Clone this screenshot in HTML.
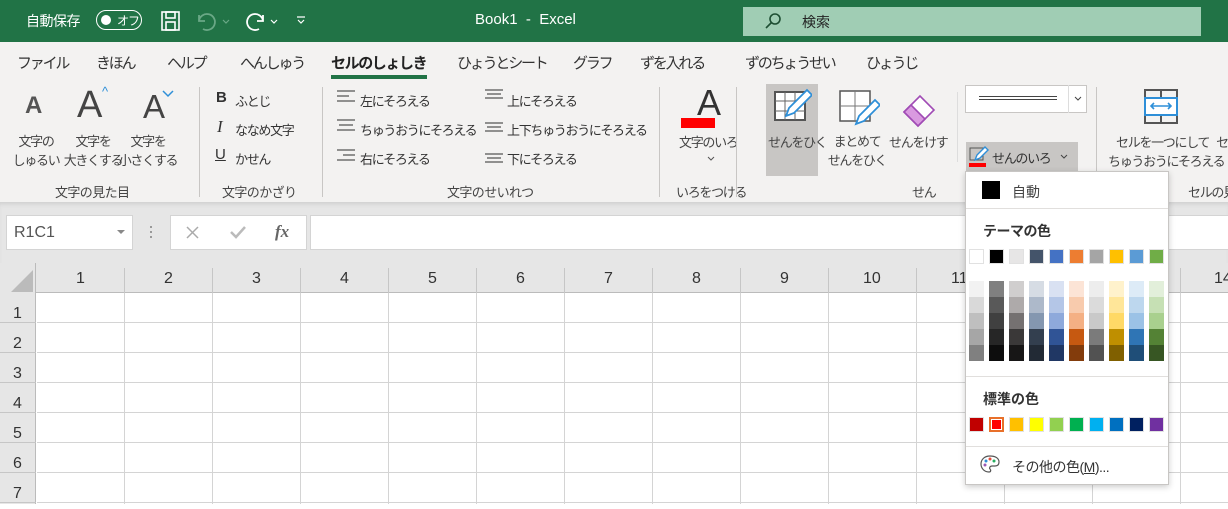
<!DOCTYPE html>
<html><head><meta charset="utf-8"><style>
*{margin:0;padding:0;box-sizing:border-box}
body{width:1228px;height:504px;overflow:hidden;position:relative;background:#fff;font-family:"Liberation Sans","Noto Sans CJK JP",sans-serif;color:#262626;font-size:13px}
.a{position:absolute;white-space:nowrap}
.t{font-size:13px;color:#333;letter-spacing:-1.3px}
.lbl{font-size:13px;color:#444;text-align:center;letter-spacing:-1.3px}
.g{letter-spacing:-0.6px}
.sep{position:absolute;width:1px;background:#c8c6c4}
.sw{position:absolute;width:15px;height:15px;border:1px solid #e1e1e1}
.col{position:absolute;width:15px;height:80px}
.tabs span{position:absolute;letter-spacing:-2.2px}
</style></head><body>
<!-- title bar -->
<div class="a" style="left:0;top:0;width:1228px;height:42px;background:#217346"></div>
<div class="a" style="left:26px;top:11px;color:#fff;font-size:14px;letter-spacing:-0.5px">自動保存</div>
<div class="a" style="left:96px;top:10px;width:46px;height:20px;border:1.5px solid #fff;border-radius:10px"></div>
<div class="a" style="left:101px;top:15px;width:10px;height:10px;background:#fff;border-radius:50%"></div>
<div class="a" style="left:117px;top:12px;color:#fff;font-size:12px;letter-spacing:-1px">オフ</div>
<svg class="a" style="left:160px;top:10px" width="22" height="22" viewBox="0 0 22 22" fill="none" stroke="#fff" stroke-width="1.6"><rect x="2" y="2" width="17" height="18"/><rect x="6" y="2" width="9" height="6"/><rect x="6" y="12" width="9" height="8"/></svg>
<svg class="a" style="left:195px;top:9px" width="40" height="24" viewBox="0 0 40 24" fill="none" stroke="#6aa886" stroke-width="1.8"><path d="M4 6v6h6M4 12a8 8 0 1 1 4 8"/><path d="M28 11l3 3 3-3" stroke-width="1.2"/></svg>
<svg class="a" style="left:243px;top:9px" width="40" height="24" viewBox="0 0 40 24" fill="none" stroke="#fff" stroke-width="1.8"><path d="M20 6v6h-6M20 12a8 8 0 1 0-4 8"/><path d="M28 11l3 3 3-3" stroke-width="1.2"/></svg>
<svg class="a" style="left:294px;top:13px" width="14" height="14" viewBox="0 0 14 14" fill="none" stroke="#fff" stroke-width="1.2"><path d="M3 4h8M4 7l3 3 3-3"/></svg>
<div class="a" style="left:475px;top:11px;color:#fff;font-size:15px">Book1&nbsp; - &nbsp;Excel</div>
<div class="a" style="left:743px;top:7px;width:458px;height:29px;background:#a0cdb4"></div>
<svg class="a" style="left:763px;top:11px" width="20" height="20" viewBox="0 0 20 20" fill="none" stroke="#1e4f33" stroke-width="1.6"><circle cx="12" cy="8" r="5"/><path d="M8.5 11.5L3 17"/></svg>
<div class="a" style="left:802px;top:12px;font-size:14px;color:#222">検索</div>
<!-- tabs -->
<div class="a" style="left:0;top:42px;width:1228px;height:160px;background:#f3f2f1"></div>
<div class="a tabs" style="left:0;top:52px;font-size:15px;color:#333">
<span style="left:17px">ファイル</span><span style="left:96px">きほん</span><span style="left:167px">ヘルプ</span><span style="left:240px">へんしゅう</span><span style="left:331px;font-weight:bold;color:#222;letter-spacing:-1.4px">セルのしょしき</span><span style="left:457px">ひょうとシート</span><span style="left:573px">グラフ</span><span style="left:640px">ずを入れる</span><span style="left:745px">ずのちょうせい</span><span style="left:866px">ひょうじ</span></div>
<div class="a" style="left:331px;top:75px;width:96px;height:4px;background:#217346"></div>
<!-- group 1 -->
<div class="a" style="left:25px;top:92px;font-size:24px;font-weight:bold;color:#555">A</div>
<div class="a" style="left:77px;top:84px;font-size:38px;color:#444;font-weight:300">A</div>
<div class="a" style="left:102px;top:84px;color:#2e8fd8;font-size:13px">^</div>
<div class="a" style="left:143px;top:88px;font-size:33px;color:#444">A</div>
<svg class="a" style="left:162px;top:90px" width="12" height="8"><path d="M1 1l5 5 5-5" fill="none" stroke="#2e8fd8" stroke-width="1.5"/></svg>
<div class="a lbl" style="left:5px;width:62px;top:132px;line-height:19px">文字の<br>しゅるい</div>
<div class="a lbl" style="left:60px;width:66px;top:132px;line-height:19px">文字を<br>大きくする</div>
<div class="a lbl" style="left:115px;width:66px;top:132px;line-height:19px">文字を<br>小さくする</div>
<div class="a lbl g" style="left:55px;top:182px">文字の見た目</div>
<div class="sep" style="left:199px;top:87px;height:110px"></div>
<!-- group 2 -->
<div class="a" style="left:216px;top:89px;font-weight:bold;font-size:15px;color:#333">B</div><div class="a t" style="left:235px;top:91px">ふとじ</div>
<div class="a" style="left:217px;top:117px;font-style:italic;font-family:'Liberation Serif',serif;font-size:17px;color:#333">I</div><div class="a t" style="left:235px;top:120px">ななめ文字</div>
<div class="a" style="left:215px;top:146px;text-decoration:underline;font-size:15px;color:#333">U</div><div class="a t" style="left:235px;top:149px">かせん</div>
<div class="a lbl g" style="left:222px;top:182px">文字のかざり</div>
<div class="sep" style="left:322px;top:87px;height:110px"></div>
<!-- group 3 -->
<svg class="a" style="left:336px;top:88px" width="20" height="80" fill="none" stroke="#555" stroke-width="1.3"><path d="M1 3h18M1 8h12M1 13h18"/><path d="M1 32h18M3 37h14M1 42h18"/><path d="M1 62h18M7 67h12M1 72h18"/></svg>
<div class="a t" style="left:360px;top:91px">左にそろえる</div>
<div class="a t" style="left:360px;top:120px">ちゅうおうにそろえる</div>
<div class="a t" style="left:360px;top:149px">右にそろえる</div>
<svg class="a" style="left:484px;top:88px" width="20" height="80" fill="none" stroke="#555" stroke-width="1.3"><path d="M1 2h18M3 6h14M1 10h18"/><path d="M1 35h18M3 39h14M1 43h18"/><path d="M1 66h18M3 70h14M1 74h18"/></svg>
<div class="a t" style="left:507px;top:91px">上にそろえる</div>
<div class="a t" style="left:507px;top:120px">上下ちゅうおうにそろえる</div>
<div class="a t" style="left:507px;top:149px">下にそろえる</div>
<div class="a lbl g" style="left:447px;top:182px">文字のせいれつ</div>
<div class="sep" style="left:659px;top:87px;height:110px"></div>
<!-- group 4 -->
<div class="a" style="left:697px;top:82px;font-size:36px;color:#333">A</div>
<div class="a" style="left:681px;top:118px;width:34px;height:10px;background:#f00"></div>
<div class="a lbl" style="left:679px;top:132px">文字のいろ</div>
<svg class="a" style="left:707px;top:156px" width="8" height="6"><path d="M1 1l3 3 3-3" fill="none" stroke="#555"/></svg>
<div class="a lbl" style="left:676px;top:182px">いろをつける</div>
<div class="sep" style="left:736px;top:87px;height:110px"></div>
<!-- group 5 -->
<div class="a" style="left:766px;top:84px;width:52px;height:92px;background:#c8c6c4"></div>
<svg class="a" style="left:772px;top:86px" width="40" height="38" fill="none"><rect x="3" y="6" width="30" height="28" fill="#fff" stroke="#555" stroke-width="2"/><path d="M3 15h30M3 25h30M13 6v28M23 6v28" stroke="#666"/><path d="M14 30l3-8 18-18 5 5-18 18z" fill="#fff" stroke="#2e8fd8" stroke-width="1.8"/></svg>
<svg class="a" style="left:836px;top:88px" width="44" height="40" fill="none"><rect x="4" y="3" width="30" height="30" fill="#fff" stroke="#555" stroke-width="1.5"/><path d="M4 18h30M19 3v30" stroke="#777"/><path d="M20 36l3-8 16-16 5 5-16 16z" fill="#fff" stroke="#2e8fd8" stroke-width="1.8"/></svg>
<svg class="a" style="left:900px;top:88px" width="40" height="40" fill="none"><path d="M4 24l16-16 14 14-16 16z" fill="#fff" stroke="#a04bb5" stroke-width="1.6"/><path d="M4 24l7-7 14 14-7 7z" fill="#d99ae0" stroke="#a04bb5" stroke-width="1.6"/></svg>
<div class="a lbl" style="left:768px;top:132px">せんをひく</div>
<div class="a lbl" style="left:826px;width:62px;top:132px;line-height:19px">まとめて<br>せんをひく</div>
<div class="a lbl" style="left:889px;top:132px">せんをけす</div>
<div class="a lbl" style="left:912px;top:182px">せん</div>
<div class="sep" style="left:957px;top:92px;height:70px;background:#ddd"></div>
<div class="a" style="left:965px;top:85px;width:122px;height:28px;background:#fff;border:1px solid #c8c6c4"></div>
<div class="a" style="left:1068px;top:85px;width:1px;height:28px;background:#ddd"></div>
<div class="a" style="left:979px;top:96px;width:78px;height:4px;border-top:1px solid #444;border-bottom:1px solid #444"></div>
<svg class="a" style="left:1074px;top:96px" width="8" height="6"><path d="M1 1l3 3 3-3" fill="none" stroke="#444"/></svg>
<div class="a" style="left:966px;top:142px;width:112px;height:30px;background:#c8c6c4"></div>
<svg class="a" style="left:968px;top:145px" width="22" height="22" fill="none"><rect x="2" y="3" width="13" height="12" stroke="#555"/><path d="M7 15l2-5 8-8 3 3-8 8z" fill="#fff" stroke="#2e8fd8" stroke-width="1.4"/><rect x="1" y="18" width="17" height="4" fill="#f00" stroke="none"/></svg>
<div class="a t" style="left:992px;top:148px">せんのいろ</div>
<svg class="a" style="left:1060px;top:154px" width="8" height="6"><path d="M1 1l3 3 3-3" fill="none" stroke="#444"/></svg>
<div class="sep" style="left:1096px;top:87px;height:110px"></div>
<svg class="a" style="left:1143px;top:88px" width="40" height="40" fill="none"><rect x="2" y="2" width="32" height="33" stroke="#555" stroke-width="2"/><path d="M18 2v8M18 27v8" stroke="#555" stroke-width="2"/><rect x="2" y="10" width="32" height="17" stroke="#2e8fd8" stroke-width="2" fill="#fff"/><path d="M8 18h20M11 15l-3 3 3 3M25 15l3 3-3 3" stroke="#2e8fd8" stroke-width="1.6"/></svg>
<div class="a lbl" style="left:1116px;top:132px">セルを一つにして&nbsp;&nbsp;&nbsp;セ</div>
<div class="a lbl" style="left:1108px;top:151px">ちゅうおうにそろえる</div>
<div class="a lbl" style="left:1188px;top:182px">セルの見</div>
<!-- formula area -->
<div class="a" style="left:0;top:202px;width:1228px;height:62px;background:#e6e6e6;box-shadow:inset 0 4px 4px -2px #cfcfcf"></div>
<div class="a" style="left:6px;top:215px;width:127px;height:35px;background:#fff;border:1px solid #d4d4d4"></div>
<div class="a" style="left:14px;top:224px;font-size:16px;color:#555">R1C1</div>
<svg class="a" style="left:117px;top:230px" width="8" height="5"><path d="M0 0h8L4 4z" fill="#888"/></svg>
<div class="a" style="left:150px;top:226px;width:2px;height:14px;background:repeating-linear-gradient(#999 0 2px,transparent 2px 5px)"></div>
<div class="a" style="left:170px;top:215px;width:137px;height:35px;background:#fff;border:1px solid #d4d4d4"></div>
<svg class="a" style="left:185px;top:225px" width="15" height="15"><path d="M2 2l11 11M13 2L2 13" stroke="#aaa" stroke-width="1.5"/></svg>
<svg class="a" style="left:229px;top:225px" width="18" height="15"><path d="M2 7l5 5L16 2" stroke="#bbb" stroke-width="2.5" fill="none"/></svg>
<div class="a" style="left:275px;top:222px;font-family:'Liberation Serif',serif;font-style:italic;font-weight:bold;font-size:17px;color:#666">fx</div>
<div class="a" style="left:310px;top:215px;width:930px;height:35px;background:#fff;border:1px solid #d4d4d4"></div>
<!-- grid -->
<div class="a" style="left:0;top:263px;width:1228px;height:30px;background:#e6e6e6;border-bottom:1px solid #bbb"></div>
<div class="a" style="left:0;top:263px;width:36px;height:241px;background:#e6e6e6;border-right:1px solid #bbb"></div>
<svg class="a" style="left:11px;top:270px" width="22" height="22"><path d="M22 0V22H0z" fill="#bbb"/></svg>
<div class="a" style="left:37px;top:293px;width:1191px;height:211px;background-image:linear-gradient(90deg,transparent 87px,#d4d4d4 87px 88px),linear-gradient(transparent 29px,#d4d4d4 29px 30px);background-size:88px 30px,88px 30px"></div>
<div class="a" style="left:37px;top:268px;width:1191px;height:25px;background-image:linear-gradient(90deg,transparent 87px,#c6c6c6 87px 88px);background-size:88px 25px"></div>
<div class="a" style="left:0;top:293px;width:36px;height:211px;background-image:linear-gradient(transparent 29px,#c6c6c6 29px 30px);background-size:36px 30px"></div>
<div class="a" style="left:0;top:270px;font-size:16px;color:#333">
<span class="a" style="left:76px">1</span><span class="a" style="left:164px">2</span><span class="a" style="left:252px">3</span><span class="a" style="left:340px">4</span><span class="a" style="left:428px">5</span><span class="a" style="left:516px">6</span><span class="a" style="left:604px">7</span><span class="a" style="left:692px">8</span><span class="a" style="left:780px">9</span><span class="a" style="left:863px">10</span><span class="a" style="left:951px">11</span><span class="a" style="left:1214px">14</span></div>
<div class="a" style="left:13px;top:299px;font-size:16px;color:#333;line-height:30px">1<br>2<br>3<br>4<br>5<br>6<br>7</div>
<!-- dropdown -->
<div class="a" style="left:965px;top:171px;width:204px;height:314px;background:#fff;border:1px solid #c8c6c4;box-shadow:0 2px 6px rgba(0,0,0,.2)"></div>
<div class="a" style="left:982px;top:181px;width:18px;height:18px;background:#000"></div>
<div class="a" style="left:1012px;top:182px;font-size:14px;color:#444">自動</div>
<div class="a" style="left:966px;top:208px;width:202px;height:1px;background:#e1dfdd"></div>
<div class="a" style="left:983px;top:221px;font-size:14px;font-weight:bold;color:#333;letter-spacing:-0.5px">テーマの色</div>
<div class="sw" style="left:969px;top:249px;background:#fff"></div><div class="sw" style="left:989px;top:249px;background:#000"></div><div class="sw" style="left:1009px;top:249px;background:#e7e6e6"></div><div class="sw" style="left:1029px;top:249px;background:#44546a"></div><div class="sw" style="left:1049px;top:249px;background:#4472c4"></div><div class="sw" style="left:1069px;top:249px;background:#ed7d31"></div><div class="sw" style="left:1089px;top:249px;background:#a5a5a5"></div><div class="sw" style="left:1109px;top:249px;background:#ffc000"></div><div class="sw" style="left:1129px;top:249px;background:#5b9bd5"></div><div class="sw" style="left:1149px;top:249px;background:#70ad47"></div>
<div class="col" style="left:969px;top:281px;background:linear-gradient(#f2f2f2 0 16px,#d9d9d9 16px 32px,#bfbfbf 32px 48px,#a6a6a6 48px 64px,#808080 64px)"></div>
<div class="col" style="left:989px;top:281px;background:linear-gradient(#808080 0 16px,#595959 16px 32px,#404040 32px 48px,#262626 48px 64px,#0d0d0d 64px)"></div>
<div class="col" style="left:1009px;top:281px;background:linear-gradient(#d0cece 0 16px,#aeaaaa 16px 32px,#757171 32px 48px,#3a3838 48px 64px,#171616 64px)"></div>
<div class="col" style="left:1029px;top:281px;background:linear-gradient(#d6dce4 0 16px,#adb9ca 16px 32px,#8497b0 32px 48px,#333f4f 48px 64px,#222a35 64px)"></div>
<div class="col" style="left:1049px;top:281px;background:linear-gradient(#d9e1f2 0 16px,#b4c6e7 16px 32px,#8ea9db 32px 48px,#305496 48px 64px,#203764 64px)"></div>
<div class="col" style="left:1069px;top:281px;background:linear-gradient(#fce4d6 0 16px,#f8cbad 16px 32px,#f4b084 32px 48px,#c65911 48px 64px,#833c0c 64px)"></div>
<div class="col" style="left:1089px;top:281px;background:linear-gradient(#ededed 0 16px,#dbdbdb 16px 32px,#c9c9c9 32px 48px,#7b7b7b 48px 64px,#525252 64px)"></div>
<div class="col" style="left:1109px;top:281px;background:linear-gradient(#fff2cc 0 16px,#ffe699 16px 32px,#ffd966 32px 48px,#bf8f00 48px 64px,#806000 64px)"></div>
<div class="col" style="left:1129px;top:281px;background:linear-gradient(#ddebf7 0 16px,#bdd7ee 16px 32px,#9bc2e6 32px 48px,#2f75b5 48px 64px,#1f4e78 64px)"></div>
<div class="col" style="left:1149px;top:281px;background:linear-gradient(#e2efda 0 16px,#c6e0b4 16px 32px,#a9d08e 32px 48px,#548235 48px 64px,#375623 64px)"></div>
<div class="a" style="left:966px;top:376px;width:202px;height:1px;background:#e1dfdd"></div>
<div class="a" style="left:983px;top:389px;font-size:14px;font-weight:bold;color:#333">標準の色</div>
<div class="sw" style="left:969px;top:417px;background:#c00000"></div><div class="sw" style="left:989px;top:417px;background:#f00;border:2px solid #e8702a;outline:1px solid #fff;outline-offset:-3px"></div><div class="sw" style="left:1009px;top:417px;background:#ffc000"></div><div class="sw" style="left:1029px;top:417px;background:#ff0"></div><div class="sw" style="left:1049px;top:417px;background:#92d050"></div><div class="sw" style="left:1069px;top:417px;background:#00b050"></div><div class="sw" style="left:1089px;top:417px;background:#00b0f0"></div><div class="sw" style="left:1109px;top:417px;background:#0070c0"></div><div class="sw" style="left:1129px;top:417px;background:#002060"></div><div class="sw" style="left:1149px;top:417px;background:#7030a0"></div>
<div class="a" style="left:966px;top:446px;width:202px;height:1px;background:#e1dfdd"></div>
<svg class="a" style="left:980px;top:454px" width="20" height="20" fill="none"><path d="M10 2C4 2 1 6 1 10s3 8 8 8c2 0 2-2 1-3s0-3 2-3h3c3 0 4-2 4-4 0-4-4-6-9-6z" stroke="#555" stroke-width="1.2"/><circle cx="6" cy="7" r="1.5" fill="#2e8fd8"/><circle cx="10" cy="5" r="1.5" fill="#e74c3c"/><circle cx="14" cy="7" r="1.5" fill="#27ae60"/><circle cx="5" cy="11" r="1.5" fill="#9b59b6"/></svg>
<div class="a" style="left:1012px;top:457px;font-size:14px;color:#333;letter-spacing:-0.5px">その他の色(<u>M</u>)...</div>
</body></html>
